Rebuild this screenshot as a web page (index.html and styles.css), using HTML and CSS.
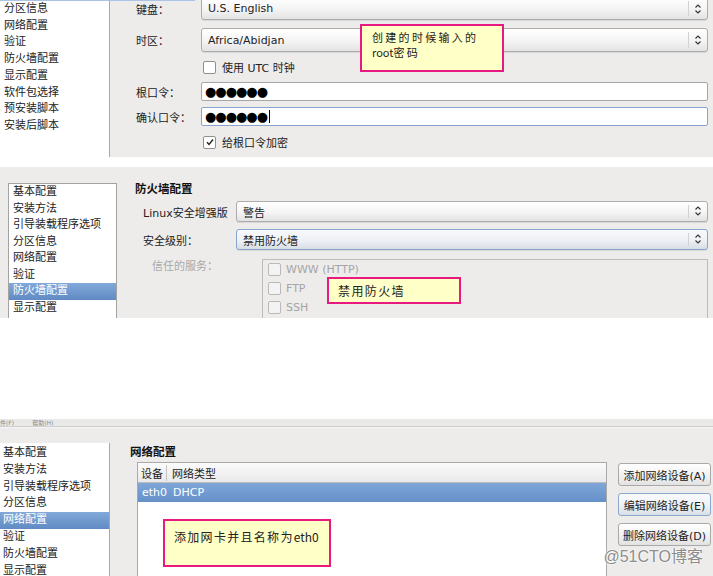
FILE: index.html
```html
<!DOCTYPE html>
<html lang="zh-CN">
<head>
  <meta charset="UTF-8" />
  <title>Kickstart 配置截图</title>
  <link rel="stylesheet" href="styles.css">
</head>
<body>
  <!-- 1: root password -->
  <section class="shot shot-root">
    <div class="topline"></div>
    <div class="window">
      <ul class="nav nav-root">
        <li>分区信息</li>
        <li>网络配置</li>
        <li>验证</li>
        <li>防火墙配置</li>
        <li>显示配置</li>
        <li>软件包选择</li>
        <li>预安装脚本</li>
        <li>安装后脚本</li>
      </ul>
      <div class="form">
        <div class="row row-kbd">
          <span class="lbl">键盘：</span>
          <div class="combo">U.S. English<span class="arrows"><svg width="8" height="12" viewBox="0 0 8 12"><path d="M1.5 4.5L4 2l2.5 2.5M1.5 7.5L4 10l2.5-2.5" fill="none" stroke="#333" stroke-width="1.1"/></svg></span></div>
        </div>
        <div class="row row-tz">
          <span class="lbl">时区：</span>
          <div class="combo">Africa/Abidjan<span class="arrows"><svg width="8" height="12" viewBox="0 0 8 12"><path d="M1.5 4.5L4 2l2.5 2.5M1.5 7.5L4 10l2.5-2.5" fill="none" stroke="#333" stroke-width="1.1"/></svg></span></div>
        </div>
        <div class="row row-check">
          <span class="lbl"></span>
          <span class="check"></span><span>使用 UTC 时钟</span>
        </div>
        <div class="row row-pw">
          <span class="lbl">根口令：</span>
          <div class="entry"><span class="dots">●●●●●●</span></div>
        </div>
        <div class="row row-pw2">
          <span class="lbl">确认口令：</span>
          <div class="entry entry-focus"><span class="dots">●●●●●●</span><span class="caret"></span></div>
        </div>
        <div class="row row-check2">
          <span class="lbl"></span>
          <span class="check"><svg width="10" height="10" viewBox="0 0 10 10"><path d="M2 5.2l2 2.3 4-5" fill="none" stroke="#222" stroke-width="1.4"/></svg></span><span>给根口令加密</span>
        </div>
      </div>
    </div>
    <div class="note note-root"><div>创建的时候输入的</div><div><span class="latin">root</span>密码</div></div>
  </section>

  <!-- 2: firewall -->
  <section class="shot shot-fw">
    <ul class="nav nav-box">
      <li>基本配置</li>
      <li>安装方法</li>
      <li>引导装载程序选项</li>
      <li>分区信息</li>
      <li>网络配置</li>
      <li>验证</li>
      <li class="active">防火墙配置</li>
      <li>显示配置</li>
    </ul>
    <div class="fw-main">
      <h2>防火墙配置</h2>
      <div class="fw-row fw-row-first">
        <span class="fw-lbl">Linux安全增强版</span>
        <div class="combo">警告<span class="arrows"><svg width="8" height="12" viewBox="0 0 8 12"><path d="M1.5 4.5L4 2l2.5 2.5M1.5 7.5L4 10l2.5-2.5" fill="none" stroke="#333" stroke-width="1.1"/></svg></span></div>
      </div>
      <div class="fw-row">
        <span class="fw-lbl">安全级别：</span>
        <div class="combo combo-focus">禁用防火墙<span class="arrows"><svg width="8" height="12" viewBox="0 0 8 12"><path d="M1.5 4.5L4 2l2.5 2.5M1.5 7.5L4 10l2.5-2.5" fill="none" stroke="#333" stroke-width="1.1"/></svg></span></div>
      </div>
      <div class="svc-row">
        <span class="svc-lbl">信任的服务：</span>
        <div class="svc-frame">
          <div class="svc"><span class="check check-off"></span>WWW (HTTP)</div>
          <div class="svc"><span class="check check-off"></span>FTP</div>
          <div class="svc"><span class="check check-off"></span>SSH</div>
        </div>
      </div>
    </div>
    <div class="note note-fw">禁用防火墙</div>
  </section>

  <!-- 3: network -->
  <section class="shot shot-net">
    <div class="menubar"><span>件(F)</span><span>帮助(H)</span></div>
    <div class="net-body">
      <ul class="nav nav-net">
        <li>基本配置</li>
        <li>安装方法</li>
        <li>引导装载程序选项</li>
        <li>分区信息</li>
        <li class="active">网络配置</li>
        <li>验证</li>
        <li>防火墙配置</li>
        <li>显示配置</li>
      </ul>
      <div class="net-main">
        <h2>网络配置</h2>
        <div class="net-wrap">
          <div class="table">
            <div class="thead"><span class="col-dev">设备</span><span class="col-type">网络类型</span></div>
            <div class="trow selected"><span class="col-dev">eth0</span><span class="col-type">DHCP</span></div>
          </div>
          <div class="buttons">
            <button>添加网络设备(A)</button>
            <button class="btn-focus">编辑网络设备(E)</button>
            <button>删除网络设备(D)</button>
          </div>
        </div>
      </div>
    </div>
    <div class="note note-net">添加网卡并且名称为<span class="latin">eth0</span></div>
    <div class="watermark">@51CTO博客</div>
  </section>
</body>
</html>
```

FILE: styles.css
```css
body {
  margin: 0;
  width: 713px;
  height: 576px;
  overflow: hidden;
  background: #fff;
  font-family: "DejaVu Sans", "Noto Sans CJK SC", sans-serif;
  font-size: 11px;
  color: #222;
}
.shot {
  position: relative;
  overflow: hidden;
  background: #edeceb;
}
.nav {
  list-style: none;
  margin: 0;
  padding: 0;
  background: #fff;
}
.nav li {
  line-height: 16.7px;
  padding-left: 4px;
  white-space: nowrap;
}
.nav li.active {
  background: linear-gradient(#82a9da, #5f8ac3);
  color: #fff;
}

/* root password shot */
.shot-root {
  height: 157px;
}
.topline {
  width: 195px;
  height: 1px;
  background: #a9c4e6;
}
.window {
  display: flex;
  height: 156px;
}
.nav-root {
  width: 109px;
  border-right: 1px solid #a9a9a9;
}
.form {
  flex: 1;
  padding: 0 5px 0 26px;
}
.row {
  display: flex;
  align-items: center;
}
.lbl {
  width: 65px;
  flex-shrink: 0;
}
.row-kbd { margin-top: -4px; height: 23px; }
.row-tz { margin-top: 8px; height: 24px; }
.row-check { margin-top: 7px; height: 16px; }
.row-pw { margin-top: 7px; height: 19px; }
.row-pw2 { margin-top: 6px; height: 19px; }
.row-check2 { margin-top: 8px; height: 16px; }
.combo {
  flex: 1;
  display: flex;
  align-items: center;
  align-self: stretch;
  padding-left: 6px;
  border: 1px solid #acacac;
  border-radius: 3px;
  background: linear-gradient(#ffffff, #f4f4f4 55%, #e3e3e3);
  box-shadow: 0 1px 0 #d8d8d8;
}
.arrows {
  margin-left: auto;
  width: 18px;
  height: 70%;
  display: flex;
  align-items: center;
  justify-content: center;
  border-left: 1px solid #d2d2d2;
}
.combo-focus {
  border-color: #88a5cb;
  background: linear-gradient(#f8f9fb, #eef1f5 55%, #d8dde5);
}
.check {
  width: 11px;
  height: 11px;
  margin: 0 6px 0 2px;
  border: 1px solid #8f8f8f;
  border-radius: 2px;
  background: #fff;
  display: inline-flex;
  align-items: center;
  justify-content: center;
  flex-shrink: 0;
}
.entry {
  flex: 1;
  align-self: stretch;
  display: flex;
  align-items: center;
  padding-left: 3px;
  border: 1px solid #a6a6a6;
  border-radius: 2px;
  background: #fff;
}
.entry-focus {
  border-color: #86a4cc;
}
.dots {
  font-size: 13px;
  color: #000;
  letter-spacing: -1px;
}
.caret {
  width: 1px;
  height: 13px;
  margin-left: 2px;
  background: #000;
}

/* annotations */
.note {
  position: absolute;
  box-sizing: border-box;
  border: 2px solid #e8197f;
  background: #ffffc8;
  font-family: "Noto Sans CJK SC", "DejaVu Sans", sans-serif;
  font-size: 12px;
  letter-spacing: 1.4px;
  color: #222;
}
.note .latin {
  letter-spacing: 0;
}
.note-root {
  left: 360px;
  top: 24px;
  width: 144px;
  height: 48px;
  padding: 4px 0 0 10px;
  font-size: 11px;
  letter-spacing: 2.3px;
  line-height: 15px;
}
.note-fw {
  left: 327px;
  top: 110px;
  width: 134px;
  height: 27px;
  padding: 2px 0 0 9px;
  line-height: 19px;
}
.note-net {
  left: 163px;
  top: 101px;
  width: 168px;
  height: 48px;
  padding: 6px 0 0 9px;
  line-height: 20px;
  letter-spacing: 1.3px;
}

/* firewall shot */
.shot-fw {
  margin-top: 10px;
  height: 151px;
  display: flex;
}
.nav-box {
  width: 107px;
  flex-shrink: 0;
  margin: 16px 0 0 8px;
  border: 1px solid #a3a3a3;
  border-bottom: none;
}
.nav-box li {
  line-height: 16.5px;
}
.fw-main {
  flex: 1;
  padding: 0 5px 0 18px;
}
h2 {
  margin: 14px 0 0;
  font-size: 11.5px;
  line-height: 16px;
  font-weight: bold;
  color: #111;
}
.fw-row {
  display: flex;
  height: 21px;
  margin-top: 7px;
  align-items: center;
}
.fw-row-first {
  margin-top: 4px;
}
.fw-lbl {
  width: 93px;
  padding-left: 8px;
  flex-shrink: 0;
}
.svc-row {
  display: flex;
  margin-top: 9px;
}
.svc-lbl {
  width: 110px;
  padding-left: 17px;
  flex-shrink: 0;
  color: #a8a8a8;
  line-height: 14px;
  margin-top: 1px;
}
.svc-frame {
  flex: 1;
  height: 70px;
  border: 1px solid #bcbcbc;
  border-bottom: none;
  padding: 0 0 0 3px;
}
.svc {
  display: flex;
  align-items: center;
  height: 19px;
  color: #a5a5a5;
}
.check-off {
  border-color: #b9b9b9;
  background: #f3f3f3;
  margin-right: 5px;
}

/* network shot */
.shot-net {
  margin-top: 100px;
  height: 158px;
}
.menubar {
  height: 7px;
  background: #e9e9e8;
  border-top: 1px solid #fff;
  border-bottom: 1px solid #cdcdcd;
  box-shadow: 0 1px 0 #f6f6f6;
  color: #8a8a8a;
  font-size: 6px;
  line-height: 7px;
  white-space: nowrap;
}
.menubar span {
  margin-right: 18px;
}
.net-body {
  display: flex;
  height: 149px;
}
.nav-net {
  width: 109px;
  flex-shrink: 0;
  margin-top: 16px;
  padding-top: 2px;
  border-right: 1px solid #a9a9a9;
}
.nav-net li {
  line-height: 16.8px;
  padding-left: 3px;
}
.net-main {
  flex: 1;
  padding-left: 20px;
}
.net-main h2 {
  margin-top: 17px;
}
.net-wrap {
  display: flex;
  margin: 2px 0 0 7px;
}
.table {
  width: 468px;
  height: 120px;
  border: 1px solid #a9a9a9;
  border-bottom: none;
  background: #fff;
}
.thead, .trow {
  display: flex;
  align-items: center;
  height: 19px;
}
.thead {
  background: linear-gradient(#fbfbfb, #e9e9e9);
  border-bottom: 1px solid #bdbdbd;
}
.thead .col-dev {
  width: 25px;
  padding-left: 3px;
  border-right: 1px solid #c4c4c4;
}
.thead .col-type {
  padding-left: 5px;
}
.trow.selected {
  background: linear-gradient(#7ea6d8, #6590c8);
  color: #fff;
}
.trow .col-dev {
  width: 31px;
  padding-left: 4px;
}
.buttons {
  display: flex;
  flex-direction: column;
  gap: 7px;
  margin: 1px 0 0 11px;
}
button {
  width: 93px;
  height: 23px;
  padding: 0;
  font-family: "DejaVu Sans", "Noto Sans CJK SC", sans-serif;
  font-size: 11px;
  color: #222;
  border: 1px solid #a9a9a9;
  border-radius: 3px;
  background: linear-gradient(#ffffff, #f1f1f1 55%, #e2e2e2);
}
.btn-focus {
  border-color: #8ba8cd;
  background: linear-gradient(#f9fafc, #edf1f6 55%, #d9dfe8);
}
.watermark {
  position: absolute;
  right: 10px;
  bottom: 9px;
  font-family: "Liberation Sans", "Noto Sans CJK SC", sans-serif;
  font-size: 16px;
  color: #8c8c8c;
  text-shadow: 0 0 2px #fff, 0 0 2px #fff;
}
```
